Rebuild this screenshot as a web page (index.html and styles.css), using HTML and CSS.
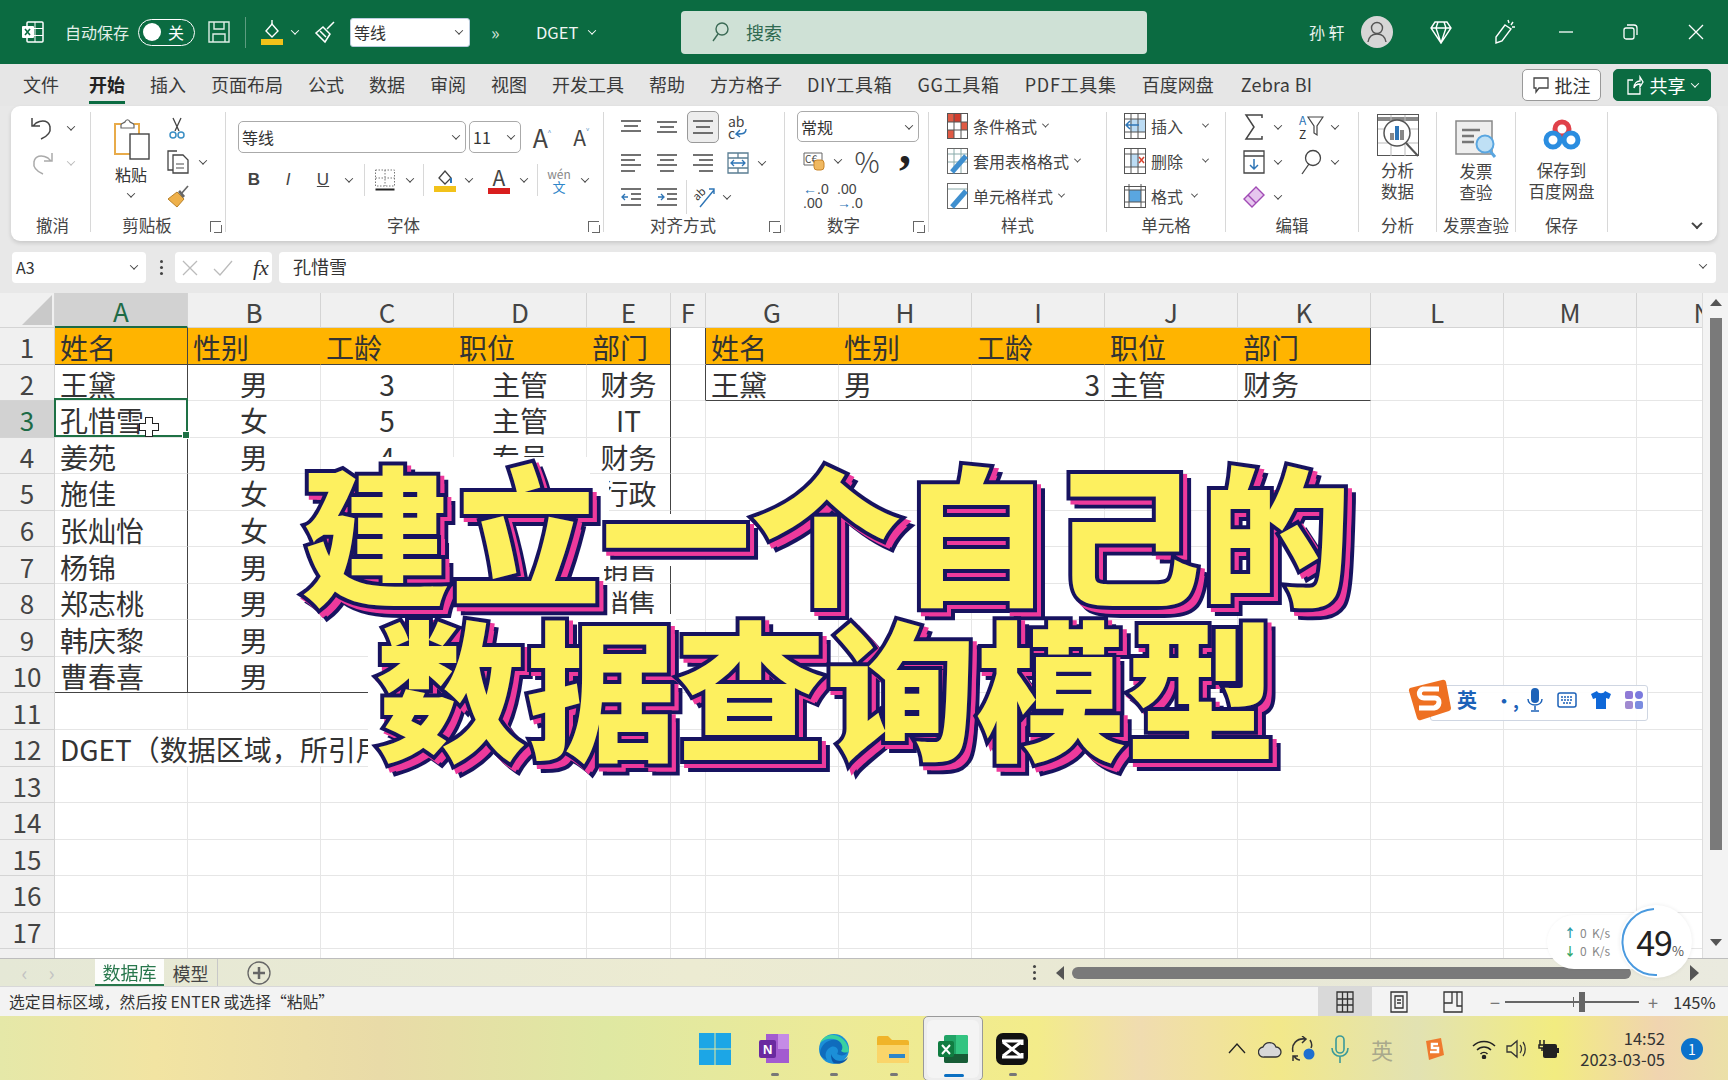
FILE: index.html
```html
<!DOCTYPE html>
<html lang="zh-CN">
<head>
<meta charset="utf-8">
<title>Excel</title>
<link rel="stylesheet" href="styles.css">
</head>
<body>
<div class="app">

<header class="titlebar">
  <svg class="t-xl" width="23" height="22" viewBox="0 0 23 22"><rect x="6" y="1" width="16" height="20" rx="1" fill="none" stroke="#fff" stroke-width="1.5"/><path d="M14 1v20M6 7.5h16M6 14.5h16" stroke="#fff"/><rect x="1" y="5" width="12" height="12" rx="1" fill="#fff"/><path d="M4 8l5 6M9 8l-5 6" stroke="#0b6b41" stroke-width="1.6"/></svg>
  <span class="t-auto">自动保存</span>
  <span class="toggle"><i></i><span>关</span></span>
  <svg class="t-save" width="22" height="24" viewBox="0 0 22 24" fill="none" stroke="#dfeee6" stroke-width="1.4"><path d="M1 2h20v20H1zM6 2v7h10V2M5 22v-8h12v8"/></svg>
  <span class="t-sep"></span>
  <svg class="t-fill" width="22" height="26" viewBox="0 0 22 26"><path d="M5 12l6-7 6 7-6 6z" fill="none" stroke="#fff" stroke-width="1.4"/><path d="M11 5V1" stroke="#fff" stroke-width="1.4"/><rect y="20" width="22" height="6" fill="#f2c21a"/></svg>
  <i class="ch wh t-ch1"></i>
  <svg class="t-brush" width="22" height="25" viewBox="0 0 22 25" fill="none" stroke="#fff" stroke-width="1.5"><path d="M20 2l-7 7M9 7l7 7-5 8-9-9z"/><path d="M6 11l6 6" /></svg>
  <span class="t-select"><span>等线</span><i class="ch"></i></span>
  <span class="t-more">»</span>
  <span class="t-dget">DGET</span>
  <i class="ch wh t-ch2"></i>
  <div class="t-search">
    <svg width="18" height="20" viewBox="0 0 18 20" fill="none" stroke="#3b6a55" stroke-width="1.4"><circle cx="11" cy="7" r="6"/><path d="M7 12l-5 7"/></svg>
    <span>搜索</span>
  </div>
  <span class="t-user">孙 轩</span>
  <svg class="t-avatar" width="32" height="32" viewBox="0 0 32 32"><circle cx="16" cy="16" r="16" fill="#d6d6d6"/><circle cx="16" cy="12" r="5.5" fill="none" stroke="#555" stroke-width="1.4"/><path d="M7 26c1-6 5-8 9-8s8 2 9 8" fill="none" stroke="#555" stroke-width="1.4"/></svg>
  <svg class="t-gem" width="22" height="24" viewBox="0 0 22 24" fill="none" stroke="#fff" stroke-width="1.4"><path d="M5 2h12l4 6-10 15L1 8zM1 8h20M8 2L6 8l5 15 5-15-2-6"/></svg>
  <svg class="t-pen" width="22" height="26" viewBox="0 0 22 26" fill="none" stroke="#fff" stroke-width="1.4"><path d="M12 6l6 4-9 12-6 2v-6zM15 1l1 3M20 3l-2 3M22 8h-3"/></svg>
  <svg class="t-min" width="14" height="14" viewBox="0 0 14 14"><path d="M0 7h14" stroke="#fff" stroke-width="1.3"/></svg>
  <svg class="t-res" width="15" height="16" viewBox="0 0 15 16" fill="none" stroke="#fff" stroke-width="1.3"><rect x="1" y="4" width="10" height="11" rx="2"/><path d="M4 1h7a3 3 0 0 1 3 3v7"/></svg>
  <svg class="t-close" width="16" height="16" viewBox="0 0 16 16"><path d="M1 1l14 14M15 1L1 15" stroke="#fff" stroke-width="1.3"/></svg>
</header>

<nav class="tabs">
  <span>文件</span>
  <span class="on">开始</span>
  <span>插入</span><span>页面布局</span><span>公式</span><span>数据</span><span>审阅</span><span>视图</span><span>开发工具</span><span>帮助</span><span>方方格子</span><span class="lat">DIY工具箱</span><span class="lat">GG工具箱</span><span class="lat">PDF工具集</span><span>百度网盘</span><span class="zb">Zebra BI</span>
  <div class="tabs-right">
    <button class="b-note"><svg width="16" height="18" viewBox="0 0 16 18" fill="none" stroke="#444" stroke-width="1.3"><path d="M1 2h14v10H6l-3 4v-4H1z"/></svg>批注</button>
    <button class="b-share"><svg width="17" height="20" viewBox="0 0 17 20" fill="none" stroke="#fff" stroke-width="1.3"><path d="M6 5H1v14h12v-6M7 13c0-5 3-7 6-7V2l3 5-3 5V9c-3 0-5 1-6 4z"/></svg>共享<i class="ch wh"></i></button>
  </div>
</nav>

<section class="ribbon">
  <div class="grp g-undo">
    <div class="rows">
      <svg width="24" height="26" viewBox="0 0 24 26" fill="none" stroke="#444" stroke-width="1.5"><path d="M11 24c7-3 10-7 9-12-1-6-7-8-14-4l-3 3M2 3v8h8"/></svg><i class="ch"></i>
      <svg class="gray" width="24" height="26" viewBox="0 0 24 26" fill="none" stroke="#aaa" stroke-width="1.5"><path d="M13 24C6 21 3 17 4 12c1-6 7-8 14-4l3 3M22 3v8h-8"/></svg><i class="ch lt"></i>
    </div>
    <div class="lbl">撤消</div>
  </div>

  <div class="grp g-clip">
    <div class="clip-body">
      <div class="paste">
        <svg width="38" height="42" viewBox="0 0 38 42"><path d="M3 6h24v30H3z" fill="#fff" stroke="#e8ab4a" stroke-width="2"/><path d="M9 7c0-2 3-2 4-3 1-3 4-3 5 0 1 1 4 1 4 3v3H9z" fill="#fff" stroke="#666" stroke-width="1.2"/><rect x="18" y="16" width="19" height="25" fill="#fff" stroke="#444" stroke-width="1.4"/></svg>
        <span>粘贴</span><i class="ch"></i>
      </div>
      <div class="clip-tools">
        <svg width="16" height="22" viewBox="0 0 16 22" fill="none"><path d="M4 1l6 13M12 1L6 14" stroke="#444" stroke-width="1.3"/><circle cx="4" cy="18" r="3" stroke="#3b8fc4" stroke-width="1.5"/><circle cx="12" cy="18" r="3" stroke="#3b8fc4" stroke-width="1.5"/></svg>
        <span class="cp"><svg width="22" height="24" viewBox="0 0 22 24" fill="none" stroke="#444" stroke-width="1.3"><path d="M9 20H1V1h9"/><path d="M6 5h10l5 5v13H6z" fill="#fff"/><path d="M9 14h8M9 18h8" stroke="#888"/></svg><i class="ch"></i></span>
        <svg width="22" height="23" viewBox="0 0 22 23"><path d="M21 1l-7 8" stroke="#666" stroke-width="1.6"/><path d="M10 7l7 7-7 8-9-8z" fill="#eeb04a" stroke="#b9822a"/><path d="M11 7l2-2 5 6-2 2z" fill="#666"/></svg>
      </div>
    </div>
    <div class="lbl">剪贴板</div><span class="launch"></span>
  </div>

  <div class="grp g-font">
    <div class="font-r1">
      <span class="sel s-name"><span>等线</span><i class="ch"></i></span>
      <span class="sel s-size"><span>11</span><i class="ch"></i></span>
      <span class="fa big">A<sup>˄</sup></span>
      <span class="fa small">A<sup>˅</sup></span>
    </div>
    <div class="font-r2">
      <b class="w34">B</b><em class="w34">I</em><u class="w36">U</u><i class="ch c16"></i><span class="vs"></span>
      <svg class="bd" width="21" height="22" viewBox="0 0 21 22" fill="none"><path d="M1 1h19v16H1zM10.5 1v16M1 9h19" stroke="#777" stroke-dasharray="1.5 1.5"/><path d="M1 20.5h19" stroke="#222" stroke-width="2"/></svg><i class="ch c28"></i><span class="vs"></span>
      <svg class="fl" width="22" height="24" viewBox="0 0 22 24"><path d="M5 10l6-7 6 7-6 6z" fill="none" stroke="#444" stroke-width="1.3"/><path d="M17 10v5" stroke="#2e75b6" stroke-width="2"/><rect y="18" width="22" height="6" fill="#f2c21a"/></svg><i class="ch c30"></i>
      <span class="fc"><span>A</span></span><i class="ch c22"></i><span class="vs"></span>
      <span class="wen"><span>wén</span><span class="wz">文</span></span><i class="ch c24"></i>
    </div>
    <div class="lbl">字体</div><span class="launch"></span>
  </div>

  <div class="grp g-align">
    <div class="rows">
      <svg class="al" width="20" height="14" viewBox="0 0 20 14" stroke="#444" stroke-width="1.3"><path d="M0 1h20M3 6h14M0 11h20"/></svg>
      <svg class="al" width="20" height="14" viewBox="0 0 20 14" stroke="#444" stroke-width="1.3"><path d="M0 2h20M3 7h14M0 12h20"/></svg>
      <span class="act"><svg width="20" height="14" viewBox="0 0 20 14" stroke="#444" stroke-width="1.3"><path d="M0 1h20M3 7h14M0 13h20"/></svg></span>
      <span class="abc"><span>ab</span><span>c<svg width="12" height="10" viewBox="0 0 12 10" fill="none" stroke="#2e75b6" stroke-width="1.5"><path d="M11 1c0 4-2 5-9 5M5 2L1 6l4 3"/></svg></span></span>
      <span></span>
      <svg class="al" width="20" height="18" viewBox="0 0 20 18" stroke="#444" stroke-width="1.3"><path d="M0 1h20M0 6h14M0 11h20M0 17h14"/></svg>
      <svg class="al" width="20" height="18" viewBox="0 0 20 18" stroke="#444" stroke-width="1.3"><path d="M0 1h20M3 6h14M0 11h20M3 17h14"/></svg>
      <svg class="al" width="20" height="18" viewBox="0 0 20 18" stroke="#444" stroke-width="1.3"><path d="M0 1h20M6 6h14M0 11h20M6 17h14"/></svg>
      <svg class="al" width="22" height="22" viewBox="0 0 22 22" fill="none" stroke="#5a7d93" stroke-width="1.3"><path d="M1 1h20v20H1zM1 6h20M1 16h20M11 1v5M11 16v5"/><path d="M4 11h14M7 8l-3 3 3 3M15 8l3 3-3 3" stroke="#2e75b6"/></svg>
      <i class="ch"></i>
      <svg class="al" width="20" height="18" viewBox="0 0 20 18" fill="none" stroke="#444" stroke-width="1.3"><path d="M0 1h20M10 6h10M10 11h10M0 17h20"/><path d="M7 9H1M4 6L1 9l3 3" stroke="#2e75b6"/></svg>
      <svg class="al" width="20" height="18" viewBox="0 0 20 18" fill="none" stroke="#444" stroke-width="1.3"><path d="M0 1h20M10 6h10M10 11h10M0 17h20"/><path d="M1 9h6M4 6l3 3-3 3" stroke="#2e75b6"/></svg>
      <span class="rot-wrap"><svg width="24" height="24" viewBox="0 0 24 24" fill="none"><path d="M8 22L22 5M17 4h5v5" stroke="#2e75b6" stroke-width="1.4"/><text x="1" y="14" font-size="11" fill="#333" transform="rotate(-45 6 10)">ab</text></svg></span>
      <i class="ch rot-ch"></i>
    </div>
    <div class="lbl">对齐方式</div><span class="launch"></span>
  </div>

  <div class="grp g-num">
    <span class="sel s-fmt"><span>常规</span><i class="ch"></i></span>
    <div class="num-r2">
      <svg width="22" height="20" viewBox="0 0 22 20"><path d="M1 2h18v12H1z" fill="none" stroke="#666"/><text x="2" y="12" font-size="10" fill="#444">C€</text><rect x="11" y="9" width="10" height="10" rx="3" fill="#f0b860" stroke="#c9852a"/></svg>
      <i class="ch"></i><span class="pct">%</span><span class="cma">,</span>
    </div>
    <div class="num-r3">
      <span class="dec"><span><em>←</em>.0</span><span>.00</span></span>
      <span class="dec"><span>.00</span><span><em>→</em>.0</span></span>
    </div>
    <div class="lbl">数字</div><span class="launch"></span>
  </div>

  <div class="grp g-style">
    <div class="list">
      <div><svg width="21" height="26" viewBox="0 0 21 26"><rect x=".5" y=".5" width="20" height="25" fill="#fff" stroke="#555"/><path d="M1 1h6v8H1zM14 9h6v8h-6zM1 17h6v8H1z" fill="#e05a44"/><path d="M7 1h7v8H7z" fill="#d03c2e"/><path d="M7 1v24M14 1v24M1 9h19M1 17h19" stroke="#555"/></svg><span>条件格式</span><i class="ch"></i></div>
      <div><svg width="21" height="26" viewBox="0 0 21 26"><rect x=".5" y=".5" width="20" height="25" fill="#fff" stroke="#666"/><path d="M1 6h19M7 1v24M14 1v24M1 14h19" stroke="#8aa"/><path d="M5 24L19 8" stroke="#3f8fcf" stroke-width="5"/></svg><span>套用表格格式</span><i class="ch"></i></div>
      <div><svg width="21" height="26" viewBox="0 0 21 26"><rect x=".5" y=".5" width="20" height="25" fill="#fff" stroke="#666"/><path d="M1 6h19" stroke="#8aa"/><path d="M5 24L19 8" stroke="#3f8fcf" stroke-width="5"/></svg><span>单元格样式</span><i class="ch"></i></div>
    </div>
    <div class="lbl">样式</div>
  </div>

  <div class="grp g-cell">
    <div class="list">
      <div><svg width="22" height="26" viewBox="0 0 22 26"><rect x=".5" y=".5" width="21" height="25" fill="#fff" stroke="#555"/><rect x="6" y="6" width="15" height="13" fill="#bcdcf4"/><path d="M7 1v24M14 1v24M1 6h20M1 19h20" stroke="#555"/><path d="M15 12H2M6 8l-4 4 4 4" stroke="#2e75b6" stroke-width="1.5" fill="none"/></svg><span>插入</span><i class="ch c-ch"></i></div>
      <div><svg width="22" height="26" viewBox="0 0 22 26"><rect x=".5" y=".5" width="21" height="25" fill="#fff" stroke="#555"/><rect x="6" y="6" width="9" height="13" fill="#bcdcf4"/><path d="M7 1v24M14 1v24M1 6h20M1 19h20" stroke="#555"/><path d="M15 9l5 6M20 9l-5 6" stroke="#d8432f" stroke-width="1.5"/></svg><span>删除</span><i class="ch c-ch"></i></div>
      <div><svg width="22" height="26" viewBox="0 0 22 26"><rect x=".5" y="3.5" width="21" height="21" fill="#fff" stroke="#555"/><rect x="5" y="7" width="12" height="12" fill="#5aa6e0"/><path d="M5 1v24M17 1v24M1 7h20M1 19h20" stroke="#555"/></svg><span>格式</span><i class="ch"></i></div>
    </div>
    <div class="lbl">单元格</div>
  </div>

  <div class="grp g-edit">
    <div class="rows">
      <svg width="20" height="26" viewBox="0 0 20 26" fill="none" stroke="#444" stroke-width="1.5"><path d="M18 4V1H2l8 12-8 12h16v-3"/></svg><i class="ch ch-a"></i>
      <span class="sort"><svg width="26" height="26" viewBox="0 0 26 26"><text x="1" y="11" font-size="12" fill="#2e75b6">A</text><text x="1" y="25" font-size="12" fill="#333">Z</text><path d="M10 3h15l-6 9v9l-3-2v-7z" fill="#fff" stroke="#444" stroke-width="1.2"/></svg></span><i class="ch"></i>
      <svg width="22" height="24" viewBox="0 0 22 24" fill="none" stroke="#444" stroke-width="1.3"><path d="M1 1h20v22H1zM1 6h20"/><path d="M11 9v10M7 15l4 4 4-4" stroke="#2e75b6" stroke-width="1.5"/></svg><i class="ch ch-a"></i>
      <svg width="22" height="26" viewBox="0 0 22 26" fill="none" stroke="#444" stroke-width="1.3"><circle cx="13" cy="9" r="7.5"/><path d="M9 15L2 25"/></svg><i class="ch"></i>
      <svg width="22" height="22" viewBox="0 0 22 22"><path d="M1 13L13 1l8 8-12 12z" fill="#e6c6ee" stroke="#a14bb5" stroke-width="1.4"/><path d="M5 9l8 8" stroke="#a14bb5" stroke-width="1.4"/></svg><i class="ch ch-a"></i>
    </div>
    <div class="lbl">编辑</div>
  </div>

  <div class="grp g-big g-an">
    <svg width="42" height="43" viewBox="0 0 42 43" fill="none"><rect x=".5" y=".5" width="41" height="41" fill="#fff" stroke="#555"/><path d="M1 5h40" stroke="#888" stroke-width="4"/><path d="M14 1v41M28 1v41M1 15h40M1 29h40" stroke="#bbb"/><circle cx="20" cy="19" r="13" fill="#fff" stroke="#555" stroke-width="1.5"/><path d="M29 29l12 13" stroke="#555" stroke-width="2"/><rect x="13" y="19" width="4" height="7" fill="#888"/><rect x="18" y="12" width="4" height="14" fill="#2e75b6"/><rect x="23" y="16" width="4" height="10" fill="#888"/></svg>
    <span class="big-t">分析<br>数据</span>
    <div class="lbl">分析</div>
  </div>

  <div class="grp g-big g-in">
    <svg width="42" height="38" viewBox="0 0 42 38" fill="none"><rect x="1" y="1" width="36" height="33" fill="#eee" stroke="#888" stroke-width="1.5"/><path d="M7 10h18M7 16h12M7 22h12" stroke="#777" stroke-width="2.5"/><circle cx="30" cy="24" r="8.5" fill="#bfe0f5" stroke="#5aa6e0" stroke-width="2"/><path d="M35 31l5 6" stroke="#5aa6e0" stroke-width="3"/></svg>
    <span class="big-t">发票<br>查验</span>
    <div class="lbl">发票查验</div>
  </div>

  <div class="grp g-big g-bd">
    <svg width="38" height="32" viewBox="0 0 38 32" fill="none" stroke-width="5"><circle cx="19" cy="10" r="7" stroke="#e0414a"/><circle cx="10" cy="21" r="7" stroke="#2a8de0"/><circle cx="28" cy="21" r="7" stroke="#2a8de0"/></svg>
    <span class="big-t">保存到<br>百度网盘</span>
    <div class="lbl">保存</div>
  </div>
  <i class="ch r-collapse"></i>
</section>

<section class="fbar">
  <div class="namebox"><span>A3</span><i class="ch"></i></div>
  <span class="dots"></span>
  <div class="fx">
    <svg width="16" height="16" viewBox="0 0 16 16"><path d="M1 1l14 14M15 1L1 15" stroke="#bbb" stroke-width="1.3"/></svg>
    <svg width="20" height="16" viewBox="0 0 20 16" fill="none"><path d="M1 9l6 6L19 1" stroke="#bbb" stroke-width="1.3"/></svg>
    <em>fx</em>
  </div>
  <div class="formula"><span>孔惜雪</span><i class="ch"></i></div>
</section>

<section class="sheet">
  <div class="gridwrap">
  <table class="grid">
    <colgroup><col class="k-h"><col class="k-w"><col class="k-w"><col class="k-w"><col class="k-w"><col class="k-e"><col class="k-f"><col class="k-w"><col class="k-w"><col class="k-w"><col class="k-w"><col class="k-w"><col class="k-w"><col class="k-w"><col class="k-w"></colgroup>
    <tr class="colh"><th class="corner"><span></span></th><th class="sel-h">A</th><th>B</th><th>C</th><th>D</th><th>E</th><th>F</th><th>G</th><th>H</th><th>I</th><th>J</th><th>K</th><th>L</th><th>M</th><th>N</th></tr>
    <tr><th>1</th><td class="o br">姓名</td><td class="o">性别</td><td class="o">工龄</td><td class="o">职位</td><td class="o br">部门</td><td class="br"></td><td class="o">姓名</td><td class="o">性别</td><td class="o">工龄</td><td class="o">职位</td><td class="o br">部门</td><td></td><td></td><td></td></tr>
    <tr><th>2</th><td class="br">王黛</td><td class="m">男</td><td class="m">3</td><td class="m">主管</td><td class="m br">财务</td><td class="br"></td><td class="bb">王黛</td><td class="bb">男</td><td class="r bb">3</td><td class="bb">主管</td><td class="bb">财务</td><td></td><td></td><td></td></tr>
    <tr><th class="sel-r">3</th><td class="br cur">孔惜雪</td><td class="m">女</td><td class="m">5</td><td class="m">主管</td><td class="m br">IT</td><td></td><td></td><td></td><td></td><td></td><td></td><td></td><td></td><td></td></tr>
    <tr><th>4</th><td class="br">姜苑</td><td class="m">男</td><td class="m">4</td><td class="m">专员</td><td class="m br">财务</td><td></td><td></td><td></td><td></td><td></td><td></td><td></td><td></td><td></td></tr>
    <tr><th>5</th><td class="br">施佳</td><td class="m">女</td><td></td><td></td><td class="m br">行政</td><td></td><td></td><td></td><td></td><td></td><td></td><td></td><td></td><td></td></tr>
    <tr><th>6</th><td class="br">张灿怡</td><td class="m">女</td><td></td><td></td><td class="br"></td><td></td><td></td><td></td><td></td><td></td><td></td><td></td><td></td><td></td></tr>
    <tr><th>7</th><td class="br">杨锦</td><td class="m">男</td><td></td><td></td><td class="m br">销售</td><td></td><td></td><td></td><td></td><td></td><td></td><td></td><td></td><td></td></tr>
    <tr><th>8</th><td class="br">郑志桃</td><td class="m">男</td><td></td><td></td><td class="m br">销售</td><td></td><td></td><td></td><td></td><td></td><td></td><td></td><td></td><td></td></tr>
    <tr><th>9</th><td class="br">韩庆黎</td><td class="m">男</td><td></td><td></td><td></td><td></td><td></td><td></td><td></td><td></td><td></td><td></td><td></td><td></td></tr>
    <tr><th>10</th><td class="br bb">曹春喜</td><td class="m bb">男</td><td class="bb"></td><td class="bb"></td><td class="bb"></td><td></td><td></td><td></td><td></td><td></td><td></td><td></td><td></td><td></td></tr>
    <tr><th>11</th><td></td><td></td><td></td><td></td><td></td><td></td><td></td><td></td><td></td><td></td><td></td><td></td><td></td><td></td></tr>
    <tr><th>12</th><td colspan="3" class="long">DGET（数据区域，所引用</td><td></td><td></td><td></td><td></td><td></td><td></td><td></td><td></td><td></td><td></td><td></td></tr>
    <tr><th>13</th><td></td><td></td><td></td><td></td><td></td><td></td><td></td><td></td><td></td><td></td><td></td><td></td><td></td><td></td></tr>
    <tr><th>14</th><td></td><td></td><td></td><td></td><td></td><td></td><td></td><td></td><td></td><td></td><td></td><td></td><td></td><td></td></tr>
    <tr><th>15</th><td></td><td></td><td></td><td></td><td></td><td></td><td></td><td></td><td></td><td></td><td></td><td></td><td></td><td></td></tr>
    <tr><th>16</th><td></td><td></td><td></td><td></td><td></td><td></td><td></td><td></td><td></td><td></td><td></td><td></td><td></td><td></td></tr>
    <tr><th>17</th><td></td><td></td><td></td><td></td><td></td><td></td><td></td><td></td><td></td><td></td><td></td><td></td><td></td><td></td></tr>
    <tr><th></th><td></td><td></td><td></td><td></td><td></td><td></td><td></td><td></td><td></td><td></td><td></td><td></td><td></td><td></td></tr>
  </table>
  </div>
  <div class="vscroll"><i class="up"></i><span class="thumb"></span><i class="dn"></i></div>
</section>

<section class="tabbar">
  <span class="nav">‹</span><span class="nav">›</span>
  <span class="stab on">数据库</span>
  <span class="stab">模型</span>
  <svg class="add" width="24" height="24" viewBox="0 0 24 24" fill="none" stroke="#666"><circle cx="12" cy="12" r="11" stroke-width="1.3"/><path d="M12 6v12M6 12h12" stroke-width="2.5"/></svg>
  <span class="kebab"></span>
  <div class="hscroll"><i class="lf"></i><span class="thumb"></span><i class="rt"></i></div>
</section>

<footer class="status">
  <span class="msg">选定目标区域，然后按 ENTER 或选择“粘贴”</span>
  <span class="view on"><svg width="18" height="22" viewBox="0 0 18 22" fill="none" stroke="#333" stroke-width="1.3"><path d="M1 1h16v20H1zM1 8h16M1 14h16M6.5 1v20M11.5 1v20"/></svg></span>
  <span class="view"><svg width="18" height="22" viewBox="0 0 18 22" fill="none" stroke="#333" stroke-width="1.3"><path d="M1 1h16v20H1z"/><path d="M5 5h8v12H5zM7 9h4M7 12h4"/></svg></span>
  <span class="view"><svg width="20" height="22" viewBox="0 0 20 22" fill="none" stroke="#333" stroke-width="1.3"><path d="M1 1h18v20H1zM1 12h8V1M14 1v14h5"/></svg></span>
  <span class="zm">−</span>
  <span class="slider"><i class="tick"></i><i class="knob"></i></span>
  <span class="zm">+</span>
  <span class="pc">145%</span>
</footer>

<footer class="taskbar">
  <div class="task-icons">
    <span class="tk"><svg width="32" height="32" viewBox="0 0 32 32"><path d="M0 0h15.5v15.5H0zM16.5 0H32v15.5H16.5zM0 16.5h15.5V32H0zM16.5 16.5H32V32H16.5z" fill="#1ca6e6"/></svg></span>
    <span class="tk dot"><svg width="32" height="32" viewBox="0 0 32 32"><path d="M8 1h23v29H8z" fill="#a35bd0"/><path d="M20 1h11v15H20z" fill="#c58be6"/><rect x="1" y="7" width="17" height="18" rx="2" fill="#6a2aa0"/><text x="5" y="21" font-size="13" font-weight="700" fill="#fff" font-family="Liberation Sans">N</text></svg></span>
    <span class="tk dot"><svg width="32" height="32" viewBox="0 0 32 32"><circle cx="16" cy="16" r="15" fill="#1b8fd8"/><path d="M2 20C3 9 14 4 22 8c6 3 9 8 7 12-2 3-7 3-10 1 3-4-1-9-6-7-5 2-7 8-4 13-4-2-7-4-7-7z" fill="#0f6cbd"/><path d="M31 18c-1-9-8-16-17-16C9 2 4 5 2 10c5-5 15-6 20-1 3 3 3 7 1 9 3 2 6 2 8 0z" fill="#3ad1a0"/><path d="M13 21c2 7 11 10 17 3-2 6-9 8-14 6-2-1-3-5-3-9z" fill="#0a56a8"/></svg></span>
    <span class="tk dot"><svg width="32" height="28" viewBox="0 0 32 28"><path d="M0 3a2 2 0 0 1 2-2h9l4 4h15a2 2 0 0 1 2 2v19a2 2 0 0 1-2 2H2a2 2 0 0 1-2-2z" fill="#f0b429"/><path d="M0 10h32v16a2 2 0 0 1-2 2H2a2 2 0 0 1-2-2z" fill="#fad56a"/><rect x="12" y="19" width="16" height="4" fill="#2e86c9"/></svg></span>
    <span class="tk act"><svg width="32" height="32" viewBox="0 0 32 32"><rect x="7" y="2" width="24" height="28" rx="2" fill="#21a366"/><path d="M19 2h10a2 2 0 0 1 2 2v7H19zM19 11h12v10H19z" fill="#33c481"/><path d="M7 21h24v7a2 2 0 0 1-2 2H9a2 2 0 0 1-2-2z" fill="#185c37"/><rect x="1" y="8" width="16" height="16" rx="2" fill="#107c41"/><path d="M5 12l8 9M13 12l-8 9" stroke="#fff" stroke-width="2"/></svg></span>
    <span class="tk dot"><svg width="32" height="32" viewBox="0 0 32 32"><rect width="32" height="32" rx="7" fill="#111"/><path d="M7 9l18 14M25 9L7 23" stroke="#fff" stroke-width="3"/><path d="M6 8h20v4M6 24h20v-4" fill="none" stroke="#fff" stroke-width="3"/></svg></span>
  </div>
  <div class="tray">
    <svg class="y1" width="18" height="11" viewBox="0 0 18 11" fill="none" stroke="#222" stroke-width="1.3"><path d="M1 10l8-9 8 9"/></svg>
    <svg class="y2" width="24" height="18" viewBox="0 0 24 18"><path d="M6 17a5 5 0 0 1-1-10 7 7 0 0 1 13 0 5 5 0 0 1 0 10z" fill="#d8d8d8" stroke="#333" stroke-width="1.3"/></svg>
    <svg class="y3" width="24" height="26" viewBox="0 0 24 26" fill="none" stroke="#333" stroke-width="1.5"><path d="M2 16C0 8 6 2 14 3M11 0l4 3-4 4M19 4c2 3 2 6 1 8M2 25v-5h5M3 20c2 3 4 4 6 4"/><circle cx="18" cy="18" r="5.5" fill="#1e6fd0" stroke="none"/></svg>
    <svg class="y4" width="18" height="28" viewBox="0 0 18 28" fill="none" stroke="#3b9a9a" stroke-width="1.6"><rect x="5" y="1" width="8" height="17" rx="4"/><path d="M1 13c0 11 16 11 16 0M9 22v6"/></svg>
    <span class="ime-t">英</span>
    <svg class="y5" width="22" height="24" viewBox="0 0 22 24"><path d="M3 4l15-3 3 17-15 5z" fill="#ef7a2e"/><path d="M15 7H9v4h6v4H7" fill="none" stroke="#fff" stroke-width="2.5"/></svg>
    <svg class="y6" width="24" height="20" viewBox="0 0 24 20" fill="none" stroke="#222" stroke-width="1.5"><path d="M1 7c6-6 16-6 22 0M5 11c4-4 10-4 14 0M8.5 15c2-2 5-2 7 0"/><circle cx="12" cy="18" r="1.5" fill="#222"/></svg>
    <svg class="y7" width="20" height="20" viewBox="0 0 20 20" fill="none" stroke="#333" stroke-width="1.3"><path d="M1 7h4l6-5v16l-6-5H1zM14 6c2 2 2 6 0 8M17 3c3 4 3 10 0 14"/></svg>
    <svg class="y8" width="22" height="20" viewBox="0 0 22 20"><rect x="5" y="5" width="14" height="14" rx="2" fill="#222"/><rect x="19" y="9" width="2" height="5" fill="#222"/><path d="M2 1v5M6 1v5M1 6h6v3H1zM4 9v3" stroke="#222" stroke-width="1.5" fill="none"/></svg>
    <div class="clock"><span>14:52</span><span>2023-03-05</span></div>
    <span class="badge">1</span>
  </div>
</footer>

<div class="mask"></div>
<div class="cursor"></div>
<h1 class="headline">
  <span class="hl" data-t="建立一个自己的">建立一个自己的</span>
  <span class="hl" data-t="数据查询模型">数据查询模型</span>
</h1>

<aside class="ime">
  <svg class="ime-s" width="44" height="42" viewBox="0 0 44 42"><path d="M2 9L34 1a3 3 0 0 1 4 2l5 26a3 3 0 0 1-2 3L13 41a3 3 0 0 1-4-2L1 12a3 3 0 0 1 1-3z" fill="#ee7022"/><path d="M31 10H15c-5 1-5 9 1 9h11c6 0 5 9-1 10H11" fill="none" stroke="#fff" stroke-width="5"/></svg>
  <span class="ime-zh">英</span>
  <span class="ime-p">·,</span>
  <svg width="16" height="24" viewBox="0 0 16 24" fill="none"><rect x="4" y="0" width="8" height="15" rx="4" fill="#1c62b8"/><path d="M1 11c0 8 14 8 14 0M8 18v4M4 23h8" stroke="#1c62b8" stroke-width="1.5"/></svg>
  <svg width="20" height="16" viewBox="0 0 20 16" fill="none" stroke="#1c62b8" stroke-width="1.5"><rect x="1" y="1" width="18" height="14" rx="2"/><path d="M4 5h12M4 8h12M6 11h8" stroke-dasharray="2 1"/></svg>
  <svg width="20" height="18" viewBox="0 0 20 18"><path d="M6 0L0 3l2 5 3-1v11h10V7l3 1 2-5-6-3c-1 3-7 3-8 0z" fill="#0f68d8"/></svg>
  <svg width="18" height="18" viewBox="0 0 18 18"><rect width="8" height="8" rx="2" fill="#8f7ad6"/><rect x="10" width="8" height="8" rx="4" fill="#7a7ade"/><rect y="10" width="8" height="8" rx="2" fill="#a08ad0"/><rect x="10" y="10" width="8" height="8" rx="2" fill="#7a8ce0"/></svg>
</aside>

<aside class="meter">
  <div class="net"><span><b class="up">↑</b>0&nbsp;&nbsp;K/s</span><span><b class="dn">↓</b>0&nbsp;&nbsp;K/s</span></div>
  <div class="dial">
    <svg width="70" height="70" viewBox="0 0 70 70" fill="none"><path d="M33 2A33 33 0 0 0 36 68" stroke="#4a9adf" stroke-width="2"/></svg>
    <span class="n">49<small>%</small></span>
  </div>
</aside>

</div>
</body>
</html>
```

FILE: styles.css
```css
*{box-sizing:border-box}
html,body{margin:0;padding:0;background:#fff}
body{font-family:"Noto Sans CJK SC","Noto Sans",sans-serif;color:#333;width:1728px;height:1080px;overflow:hidden}
.app{position:relative;width:1728px;height:1080px;overflow:hidden;background:#e8e8e8;display:flex;flex-direction:column}
svg{flex:none;display:block}

.ch{display:block;width:6px;height:6px;border-right:1.5px solid #444;border-bottom:1.5px solid #444;transform:rotate(45deg) translate(-1px,-1px);flex:none}
.ch.wh{border-color:#fff}
.ch.lt{border-color:#bbb}

/* title bar */
.titlebar{height:64px;background:#0b6b41;display:flex;align-items:center;color:#fff;flex:none}
.t-xl{margin-left:21px}
.t-auto{margin-left:21px;font-size:16px;width:65px;color:#e4f0ea;white-space:nowrap}
.toggle{margin-left:8px;width:57px;height:27px;border:1.5px solid #fff;border-radius:14px;display:flex;align-items:center;justify-content:space-between;padding:0 10px 0 4px;font-size:16px}
.toggle i{width:18px;height:18px;border-radius:50%;background:#fff}
.t-save{margin-left:13px}
.t-sep{margin-left:15px;width:1px;height:31px;background:#5d9c80}
.t-fill{margin-left:15px}
.t-ch1{margin-left:9px}
.t-brush{margin-left:16px}
.t-select{margin-left:14px;width:120px;height:29px;background:#fff;border-radius:3px;border:1px solid #bcd;color:#333;font-size:16px;display:flex;align-items:center;justify-content:space-between;padding:0 7px 0 3px}
.t-more{margin-left:21px;width:10px;font-size:18px;color:#cfe1d6}
.t-dget{margin-left:35px;font-size:16.5px;width:44px;color:#f0f6f3}
.t-ch2{margin-left:9px}
.t-search{margin-left:86px;width:466px;height:43px;border-radius:4px;background:#cfe1d6;display:flex;align-items:center;padding-left:30px;color:#2f6a50;font-size:18px;gap:17px}
.t-user{margin-left:162px;font-size:16px;width:52px;white-space:nowrap;color:#e8f2ed}
.t-gem{margin-left:37px}
.t-pen{margin-left:41px}
.t-min{margin-left:44px}
.t-res{margin-left:50px}
.t-close{margin-left:50px}

/* tabs */
.tabs{height:42px;flex:none;display:flex;align-items:center;padding-left:23px;gap:25px;font-size:18px;color:#3a3a3a;background:#e6e6e6;position:relative}
.tabs>span{white-space:nowrap;position:relative;line-height:28px;top:-1px}
.tabs>span.lat{letter-spacing:.7px}
.tabs>span.zb{letter-spacing:.3px;margin-left:2px}
.tabs>span.on{font-weight:700;margin-left:5px;color:#222}
.tabs>span.on::after{content:"";position:absolute;left:0;right:0;bottom:-6px;height:3px;background:#0b6b41}
.tabs-right{margin-left:auto;margin-right:17px;display:flex;gap:12px}
.tabs-right button{font:inherit;height:32px;border-radius:5px;display:flex;align-items:center;justify-content:center;gap:6px;padding:0}
.b-note{width:79px;background:#fff;border:1px solid #999;color:#333}
.b-share{width:98px;background:#0b6b41;border:1px solid #0b6b41;color:#fff}

/* ribbon */
.ribbon{height:135px;flex:none;margin-left:11px;width:1706px;background:#fff;border-radius:9px;display:flex;padding-top:6px;box-shadow:0 2px 4px rgba(0,0,0,.14);position:relative}
.grp{height:120px;border-right:1px solid #d8d8d8;position:relative;flex:none}
.lbl{position:absolute;left:0;right:0;bottom:-1px;text-align:center;font-size:16.5px;line-height:16px;color:#444;white-space:nowrap}
.g-clip .lbl,.g-font .lbl,.g-align .lbl{right:22px}
.g-num .lbl{right:26px}
.g-undo .lbl{left:4px}
.launch{position:absolute;right:4px;bottom:0;width:11px;height:11px;border-left:1px solid #666;border-top:1px solid #666}
.launch::after{content:"";position:absolute;left:3px;top:3px;width:7px;height:7px;border-right:1.3px solid #666;border-bottom:1.3px solid #666}
.rows{display:grid;grid-template-rows:repeat(3,35px);margin-top:-2px;align-items:center;justify-items:center}

.g-undo{width:80px}
.g-undo .rows{grid-template-columns:44px 14px;padding-left:9px}

.g-clip{width:135px}
.clip-body{display:flex;padding-left:21px}
.paste{width:38px;display:flex;flex-direction:column;align-items:center;font-size:16px;padding-top:6px}
.paste span{margin-top:4px;line-height:20px}
.paste .ch{margin-top:8px}
.clip-tools{margin-left:17px;padding-top:5px;display:flex;flex-direction:column;gap:11px;width:70px}
.clip-tools>svg:first-child{margin-left:2px}
.cp{display:flex;align-items:center;gap:11px}
.paste svg{display:block}

.g-font{width:378px;padding-left:12px}
.font-r1{display:flex;align-items:center;margin-top:9px;gap:3px;height:32px}
.sel{height:32px;border:1.3px solid #aaa;border-radius:5px;display:flex;align-items:center;justify-content:space-between;font-size:16px;padding:0 6px 0 3px;background:#fff}
.s-name{width:230px}
.s-size{width:52px}
.fa{display:block;color:#444;line-height:1;position:relative}
.fa sup{font-size:12px;color:#2e75b6;vertical-align:8px;line-height:0}
.fa.big{font-size:25px;margin-left:9px;width:38px}
.fa.small{font-size:21px;width:30px}
.font-r2{display:flex;align-items:center;height:34px;margin-top:10px;margin-left:-1px}
.font-r2 b,.font-r2 em,.font-r2 u{font-size:17px;text-align:center;color:#444;font-family:"Liberation Sans",sans-serif}
.w34{width:34px}.w36{width:36px}
.vs{width:1px;height:32px;background:#d8d8d8;flex:none;margin:0 8px 0 7px}
.font-r2 .ch{margin:0 5px}
.font-r2 .ch.c16{margin:0 5px}
.bd{margin-left:0;width:24px}
.font-r2 .ch.c28{margin:0 3px 0 10px}
.fl{margin-left:2px}
.font-r2 .ch.c30{margin:0 16px 0 10px}
.fc{width:22px;height:28px;border-bottom:6px solid #d91e1e;display:flex;justify-content:center;font-size:21px;line-height:23px;color:#444}
.font-r2 .ch.c22{margin:0 3px 0 11px}
.wen{width:24px;display:flex;flex-direction:column;align-items:center;font-size:12px;line-height:13px;color:#888;margin-left:1px}
.wz{color:#2e86c9;font-size:13px}
.font-r2 .ch.c24{margin:0 0 0 11px}

.g-align{width:181px}
.g-align .rows{grid-template-columns:36px 36px 35px 35px 14px;padding-left:9px;margin-top:-4px;grid-template-rows:37px 35px 34px}
.act{width:32px;height:32px;border:1.3px solid #999;border-radius:5px;background:#ededed;display:flex;align-items:center;justify-content:center}
.abc{display:flex;flex-direction:column;font-size:14px;line-height:12px;align-items:flex-start;color:#444}
.abc span{display:flex;align-items:center}
.rot-wrap{border-left:1px solid #d8d8d8;width:35px;height:34px;display:flex;align-items:center;justify-content:center;justify-self:start;margin-left:1px}
.rot-ch{grid-column:4;justify-self:start;margin-left:4px}

.g-num{width:144px;padding-left:12px}
.s-fmt{width:122px;height:31px;margin-top:-1px}
.num-r2{display:flex;align-items:center;height:35px;margin-top:1px;padding-left:6px}
.num-r2 .ch{margin-left:10px}
.pct{font-size:28px;margin-left:8px;width:36px;text-align:center;color:#444;font-weight:300;line-height:1}
.cma{font-family:"Liberation Serif",serif;font-size:48px;width:20px;margin-left:14px;line-height:30px;height:30px;color:#222;font-weight:700;position:relative;top:-14px}
.num-r3{display:flex;gap:14px;padding-left:6px;height:35px;align-items:center}
.dec{display:flex;flex-direction:column;font-size:14px;line-height:14px;color:#444;width:20px;font-family:"Liberation Sans",sans-serif;white-space:nowrap}
.dec em{font-style:normal;color:#2e75b6}

.list{display:grid;grid-template-rows:repeat(3,35px);margin-top:-4px}
.list>div{display:flex;align-items:center;font-size:16px;white-space:nowrap}
.list span{color:#444}
.g-style{width:178px;padding-left:18px}
.list svg{margin-right:5px}
.list .ch{margin-left:6px;width:5px;height:5px}
.g-cell{width:119px;padding-left:17px}
.g-cell .list svg{margin-right:5px}
.g-cell .list .ch{margin-left:9px}
.g-cell .list .ch.c-ch{margin-left:20px}

.g-edit{width:133px}
.g-edit .rows{grid-template-columns:56px 10px 38px 10px;margin-top:-3px}
.g-edit .rows>:nth-child(5){grid-column:1}
.g-edit .rows>:nth-child(6){grid-column:2}
.g-edit .rows>:nth-child(9){grid-column:1}
.g-edit .rows>:nth-child(10){grid-column:2}
.g-edit .ch-a{justify-self:start;margin-left:-7px}

.g-big{display:flex;flex-direction:column;align-items:center}
.big-t{font-size:16.5px;line-height:21px;text-align:center;color:#444;white-space:nowrap}
.g-an{width:78px;padding-top:2px}
.g-an .big-t{margin-top:3px}
.g-in{width:79px;padding-top:8px}
.g-in .big-t{margin-top:3px}
.g-bd{width:92px;padding-top:7px}
.g-bd .big-t{margin-top:9px}
.r-collapse{position:absolute;right:16px;bottom:12px;width:8px;height:8px;border-width:2px}

/* formula */
.fbar{height:31px;margin-top:11px;flex:none;display:flex;padding:0 12px;align-items:stretch}
.namebox{width:134px;background:#fff;border-radius:4px;display:flex;align-items:center;justify-content:space-between;padding:0 9px 2px 4px;font-size:16px}
.dots{width:29px;position:relative}
.dots::before{content:"";position:absolute;left:14px;top:8px;width:3px;height:3px;background:#444;border-radius:50%;box-shadow:0 6px 0 #444,0 12px 0 #444}
.fx{width:97px;background:#fff;border-radius:4px;display:flex;align-items:center;padding-left:7px;gap:15px}
.fx em{font-family:"Liberation Serif",serif;font-size:22px;color:#333;margin-left:5px;line-height:1}
.formula{margin-left:7px;flex:1;background:#fff;border-radius:4px;display:flex;align-items:center;justify-content:space-between;padding:0 10px 3px 14px;font-size:18px}

/* sheet */
.sheet{height:665px;margin-top:10px;flex:none;display:flex;background:#fff}
.gridwrap{width:1702px;height:665px;overflow:hidden}
.grid{table-layout:fixed;border-collapse:separate;border-spacing:0;width:1769px}
.k-h{width:55px}.k-w{width:133px}.k-e{width:84px}.k-f{width:35px}
.grid tr{height:36.55px}
.grid tr.colh{height:35px}
.grid th{background:#f0f0f0;font-weight:400;font-size:26px;color:#444;padding:3px 0 0;border-right:1px solid #d4d4d4;border-bottom:1px solid #d4d4d4;line-height:1;text-align:center}
.colh th{font-size:26px;vertical-align:bottom;padding:0 0 2px;overflow:hidden}
.corner{position:relative}
.corner span{position:absolute;right:2px;bottom:2px;width:0;height:0;border-left:30px solid transparent;border-bottom:30px solid #c9c9c9}
.grid th.sel-h{background:#d2d2d2;color:#1e6b46;border-bottom:2px solid #1e6b46}
.grid th.sel-r{background:#d2d2d2;color:#1e6b46}
.grid td{padding:3px 0 0 5px;font-size:28px;line-height:1;white-space:nowrap;border-right:1px solid #e6e6e6;border-bottom:1px solid #e6e6e6;color:#333}
.grid td.o{background:#ffb400;border-bottom-color:#444;border-right-color:#ffb400;padding-left:5px}
.grid td.br{border-right-color:#444}
.grid td.bb{border-bottom-color:#444}
.grid td.m{text-align:center;padding:3px 0 0}
.grid td.r{text-align:right;padding:3px 4px 0 0}
.grid td.long{overflow:visible;border-right-color:#e6e6e6}
.grid td.cur{position:relative}
.grid td.cur::after{content:"";position:absolute;left:-1px;top:-3px;right:-1px;bottom:0;border:2px solid #1e7145;pointer-events:none}
.grid td.cur::before{content:"";position:absolute;right:-3px;bottom:-2px;width:6px;height:6px;background:#1e7145;border:1px solid #fff;z-index:1}

.vscroll{width:26px;background:#f3f3f3;border-left:1px solid #ddd;display:flex;flex-direction:column;align-items:center;padding-top:6px;position:relative}
.vscroll .thumb{width:12px;height:532px;background:#7a7a7a;margin-top:12px}
.vscroll .up{border:6px solid transparent;border-top:0;border-bottom:7px solid #555}
.vscroll .dn{border:6px solid transparent;border-bottom:0;border-top:7px solid #555;margin-top:89px}

/* tab bar */
.tabbar{height:28px;flex:none;background:linear-gradient(90deg,#e5e8d6,#ecebd2 40%,#e8e8d5 70%,#eaeadf);border-top:1px solid #bdbdbd;display:flex;align-items:center;font-size:18px;position:relative}
.nav{width:27px;text-align:center;color:#c2c2c2;font-size:20px;line-height:1}
.tabbar .nav:first-child{margin-left:11px}
.stab{height:27px;display:flex;align-items:center;justify-content:center;color:#444}
.stab.on{margin-left:30px;width:69px;background:#fff;color:#1e7145;border-bottom:2px solid #1e7145;opacity:.95}
.stab:not(.on){width:54px;border-right:1px solid #c8c8c8}
.add{margin-left:29px}
.kebab{margin-left:762px;width:3px;height:3px;background:#444;border-radius:50%;box-shadow:0 -6px 0 #444,0 6px 0 #444}
.hscroll{margin-left:20px;width:643px;display:flex;align-items:center;gap:8px}
.hscroll .thumb{width:560px;height:12px;background:#7a7a7a;border-radius:6px}
.hscroll .lf{border:7px solid transparent;border-left:0;border-right:8px solid #555}
.hscroll .rt{border:8px solid transparent;border-right:0;border-left:9px solid #555;margin-left:51px}

/* status */
.status{height:30px;flex:none;background:#f3f3f3;border-top:1px solid #d8d8d8;display:flex;align-items:center;font-size:15.8px;color:#333}
.msg{margin-left:9px;width:1309px;white-space:nowrap}
.view{width:54px;height:30px;display:flex;align-items:center;justify-content:center}
.view.on{background:#d9d9d9}
.zm{width:18px;text-align:center;color:#777;font-size:18px;margin-left:4px}
.view+.zm{margin-left:6px}
.slider{width:134px;height:2px;background:#666;position:relative;margin:0 1px}
.slider .tick{position:absolute;left:68px;top:-4px;width:1px;height:10px;background:#666}
.slider .knob{position:absolute;left:74px;top:-9px;width:6px;height:20px;background:#666}
.pc{margin-left:11px;font-size:16.5px}

/* taskbar */
.taskbar{flex:1;display:flex;align-items:center;position:relative;background:linear-gradient(90deg,#e5e8a8 0,#f2e4a2 9%,#e9dba8 22%,#dfe8a2 35%,#ecea98 48%,#f3ec8a 60%,#f0dcb0 66%,#f2e88a 74%,#e2e2b2 82%,#f2ec80 90%,#f0d4b0 96%,#ebe0a8 100%)}
.task-icons{margin-left:685px;display:flex;align-items:center}
.tk{width:59.5px;height:65px;display:flex;align-items:center;justify-content:center;position:relative}
.tk.dot::after{content:"";position:absolute;bottom:5px;left:26px;width:8px;height:3px;border-radius:2px;background:#777}
.tk.act::before{content:"";position:absolute;left:3px;right:3px;top:3px;bottom:2px;border-radius:6px;background:rgba(255,255,255,.4)}
.tk.act::after{content:"";position:absolute;bottom:3px;left:20px;width:20px;height:3px;border-radius:2px;background:#0b6fc2}
.tk svg{position:relative}
.tray{position:absolute;left:1228px;top:0;height:65px;display:flex;align-items:center}
.y2{margin-left:12px}
.y3{margin-left:9px}
.y4{margin-left:16px}
.ime-t{margin-left:22px;width:24px;font-size:22px;color:#a9a98c;line-height:1}
.y5{margin-left:28px}
.y6{margin-left:27px}
.y7{margin-left:10px}
.y8{margin-left:12px}
.clock{margin-left:5px;width:100px;display:flex;flex-direction:column;align-items:flex-end;font-size:16.5px;line-height:21px;color:#333;white-space:nowrap}
.badge{margin-left:16px;width:22px;height:22px;border-radius:50%;background:#0b72cc;color:#fff;font-size:14px;display:flex;align-items:center;justify-content:center}

/* overlays */
.mask{position:absolute;left:0;top:0;width:1728px;height:1080px;background:#fff;clip-path:polygon(323px 457px,590px 457px,590px 476px,609px 476px,609px 514px,676px 514px,676px 566px,604px 566px,604px 590px,612px 590px,612px 614px,676px 614px,676px 700px,606px 700px,606px 780px,368px 780px,368px 620px,323px 620px)}
.cursor{position:absolute;left:140px;top:418px;width:18px;height:18px;background:linear-gradient(#fff,#fff) center/6px 18px no-repeat,linear-gradient(#fff,#fff) center/18px 6px no-repeat;filter:drop-shadow(1px 0 0 #222) drop-shadow(-1px 0 0 #222) drop-shadow(0 1px 0 #222) drop-shadow(0 -1px 0 #222)}
.headline{position:absolute;left:0;top:451px;width:1652px;margin:0;text-align:center;font-size:150px;line-height:155px;font-weight:900}
.hl{display:block;position:relative;z-index:0;color:#fdf05f;-webkit-text-stroke:8px #17135f;paint-order:stroke fill}
.hl::before,.hl::after{content:attr(data-t);position:absolute;left:0;right:0;top:0;z-index:-1;paint-order:stroke fill}
.hl::before{transform:translate(8px,8px);color:#ee3a9c;-webkit-text-stroke:8px #17135f}
.hl::after{transform:translate(4px,4px);color:#ee3a9c;-webkit-text-stroke:8px #ee3a9c}

.ime{position:absolute;left:1408px;top:679px;height:42px;width:240px;display:flex;align-items:center;gap:14px}
.ime::before{content:"";position:absolute;left:22px;right:0;top:6px;height:34px;background:rgba(255,255,255,.92);border:1px solid #cfd6e2;border-radius:3px}
.ime>*{position:relative}
.ime-s{margin-right:-1px}
.ime-zh{font-size:20px;font-weight:700;color:#1c62b8;line-height:1;width:22px;margin-left:-8px}
.ime-p{font-size:18px;font-weight:700;color:#1c62b8;width:18px;line-height:1;margin-left:2px}

.meter{position:absolute;left:1547px;top:905px;width:145px;height:73px}
.net{position:absolute;left:0;top:10px;width:115px;height:54px;background:#fff;border-radius:27px;display:flex;flex-direction:column;justify-content:center;padding-left:17px;font-size:12px;line-height:18px;color:#888;box-shadow:0 0 3px rgba(0,0,0,.05)}
.net span{white-space:nowrap}
.net b{font-weight:700;margin-right:4px}
.net .up{color:#2b9aa5}.net .dn{color:#35a86a}
.dial{position:absolute;left:73px;top:0;width:72px;height:73px;border-radius:50%;background:#fff;display:flex;align-items:center;justify-content:center;box-shadow:0 0 4px rgba(0,0,0,.08);padding-left:8px}
.dial svg{position:absolute;left:1px;top:2px}
.n{font-size:34px;line-height:1;color:#222;position:relative;white-space:nowrap;letter-spacing:-1px}
.n small{font-size:13px;letter-spacing:0;color:#555}
```
